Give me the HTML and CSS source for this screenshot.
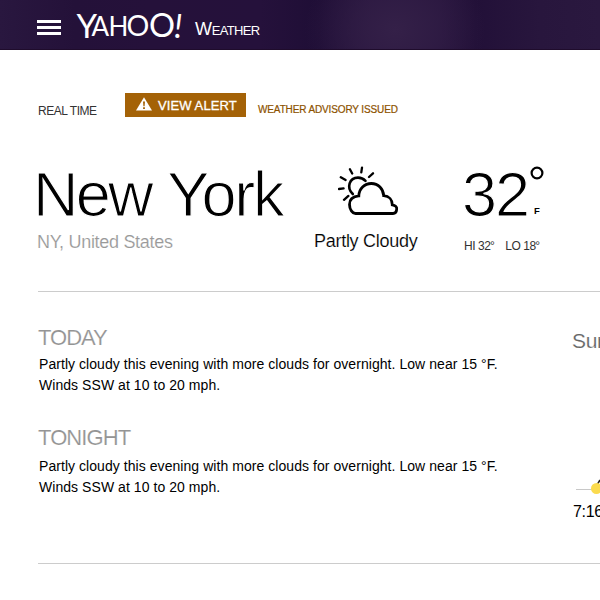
FILE: index.html
```html
<!DOCTYPE html>
<html lang="en">
<head>
<meta charset="utf-8">
<title>Yahoo Weather</title>
<link rel="stylesheet" href="styles.css">
</head>
<body>
<header class="topbar">
  <div class="menu"><span></span><span></span><span></span></div>
  <svg class="logo" width="110" height="50" viewBox="0 0 110 50"><text fill="#fff"><tspan x="0.500" y="37.500" font-size="33">Y</tspan><tspan x="15.500" y="35.500" font-size="26">A</tspan><tspan x="32.500" y="35.500" font-size="26">H</tspan><tspan x="50.500" y="36" font-size="28.500">O</tspan><tspan x="73" y="37" font-size="32.500">O</tspan><tspan x="98" y="37.500" font-size="33" font-style="italic">!</tspan></text></svg>
  <div class="product">W<span>EATHER</span></div>
</header>
<main>
  <section class="alerts">
    <span class="realtime">REAL TIME</span>
    <a class="alert-btn"><svg width="16" height="14" viewBox="0 0 16 14"><path d="M8 .2 16 13.6H0z" fill="#fff"/><path d="M7 4.5h2l-.4 4.8H7.4zM7.1 10.3h1.8v1.8H7.1z" fill="#a46207"/></svg><span>VIEW ALERT</span></a>
    <span class="advisory">WEATHER ADVISORY ISSUED</span>
  </section>
  <section class="current">
    <div class="place">
      <h1>New <span>York</span></h1>
      <p>NY, United States</p>
    </div>
    <div class="sky">
      <svg width="62" height="50" viewBox="0 0 62 50" fill="none" stroke="#000" stroke-linecap="round">
        <path stroke-width="2.800" d="M17.500 47.500C14.500 47.500 11.500 43.500 11.500 38.500C11.500 33.500 15 30.400 20.800 29.900C21 22.500 26.500 17.500 33.300 17.500C40.300 17.500 45.300 22.500 45.700 29.700C51.200 30 54.300 34 54.300 38.800C57.500 39.200 59 41.200 58.700 43.200C58.500 46 57.500 47.500 55 47.500H17.500"/>
        <path stroke-width="2.600" d="M14.800 28C8 21.500 11.500 11.600 20 11.600C23.500 11.600 25.500 12.700 27.500 14.800"/>
        <path stroke-width="2.300" d="M11.900 3.200 14.200 7.500M24 1.700 23.300 6.300M35 7.300 31 11M2.800 11.300 7.600 14M.900 23 5.600 22.300M6 33.800 10.400 29.900"/>
      </svg>
      <p>Partly Cloudy</p>
    </div>
    <div class="temp">
      <div class="degrees"><span class="num">32</span><span class="unit"><svg width="14" height="14" viewBox="0 0 14 14"><circle cx="7" cy="7" r="5.400" fill="none" stroke="#000" stroke-width="2.200"/></svg><b>F</b></span></div>
      <div class="range"><span>HI 32<i>°</i></span><span>LO 18<i>°</i></span></div>
    </div>
  </section>
  <section class="forecast">
    <div class="days">
      <h2>TODAY</h2>
      <p>Partly cloudy this evening with more clouds for overnight. Low near 15 °F.<br>Winds SSW at 10 to 20 mph.</p>
      <h2 class="tonight">TONIGHT</h2>
      <p>Partly cloudy this evening with more clouds for overnight. Low near 15 °F.<br>Winds SSW at 10 to 20 mph.</p>
    </div>
    <aside class="sun">
      <h3>Sun</h3>
      <svg width="30" height="20" viewBox="0 0 30 20"><path d="M3 11.500H22" stroke="#c8c8c8"/><path d="M24 7 27 2" stroke="#222" stroke-width="1.500"/><circle cx="23.500" cy="10.500" r="5.500" fill="#fbdb4e"/></svg>
      <time>7:16</time>
    </aside>
  </section>
</main>
</body>
</html>
```
FILE: styles.css
```css
* { box-sizing: border-box; margin: 0; padding: 0; }
html, body { width: 600px; height: 600px; overflow: hidden; }
body { background: #fff; color: #000; font-family: "Liberation Sans", Arial, sans-serif; }
.topbar {
  display: flex; height: 50px; padding-left: 37px; color: #fff;
  border-bottom: 1px solid #1f0c2c;
  background:
    radial-gradient(ellipse 90px 80px at 395px 30px, #342048 0%, rgba(52,32,72,.6) 45%, rgba(52,32,72,0) 100%),
    linear-gradient(90deg, #29173f 0, #241139 75px, #25113a 150px, #25113b 260px, #1f0e36 318px, #27143d 370px, #27143d 440px, #221038 475px, #28163d 540px, #2a183f 600px);
}
.menu { width: 24px; padding-top: 20px; }
.menu span { display: block; height: 3px; margin-bottom: 3px; background: #fff; }
.logo { flex: none; margin-left: 15px; font-family: Lato, sans-serif; }
.product { margin-left: 9px; font-size: 18px; line-height: 59px; letter-spacing: -.3px; }
.product span { font-size: 13px; letter-spacing: -.65px; }
.alerts { display: flex; height: 75px; padding: 43px 0 0 38px; }
.realtime { width: 87px; font-size: 12px; line-height: 36px; letter-spacing: -.45px; color: #333; }
.alert-btn { display: flex; width: 121px; height: 24px; padding: 4px 0 0 11px; background: #a46207; color: #fff; font-size: 13px; line-height: 17px; letter-spacing: .1px; }
.alert-btn span { margin-left: 6px; white-space: nowrap; -webkit-text-stroke: .3px #fff; }
.advisory { margin-left: 12px; font-size: 10px; line-height: 33px; letter-spacing: -.13px; color: #8d5200; -webkit-text-stroke: .2px #8d5200; white-space: nowrap; }
.current { display: flex; height: 167px; margin-left: 38px; border-bottom: 1px solid #ccc; }
.place { width: 276px; padding-top: 34px; white-space: nowrap; }
h1 { margin-left: -5px; font-size: 63px; line-height: 70px; font-weight: 400; letter-spacing: -2.800px; -webkit-text-stroke: 1.2px #fff; }
h1 span { margin-left: 2px; letter-spacing: -2.200px; }
.place p { margin: 3px 0 0 -1px; font-size: 18px; line-height: 20px; color: #999; letter-spacing: -.3px; -webkit-text-stroke: .15px #fff; }
.sky { width: 150px; padding-top: 41px; white-space: nowrap; }
.sky svg { display: block; margin-left: 24px; }
.sky p { margin-top: 14px; font-size: 18px; line-height: 22px; letter-spacing: -.28px; -webkit-text-stroke: .15px #fff; }
.temp { padding-top: 34px; }
.degrees { display: flex; height: 71px; }
.num { width: 66px; margin-left: -2px; font-size: 63px; line-height: 70px; letter-spacing: -2px; -webkit-text-stroke: 1.2px #fff; }
.unit { display: flex; flex-direction: column; padding: 7px 0 0 2px; }
.unit b { margin: 25px 0 0 4px; font-size: 9.500px; line-height: 12px; }
.range { display: flex; gap: 11px; margin-top: 8px; font-size: 12px; line-height: 16px; letter-spacing: -.45px; color: #333; }
.range i { font-style: normal; font-size: 12px; margin-left: -.5px; }
.forecast { display: flex; height: 272px; margin-left: 38px; border-bottom: 1px solid #ccc; }
.days { flex: none; width: 534px; padding-top: 33px; }
h2 { font-size: 22px; line-height: 26px; font-weight: 400; color: #949494; letter-spacing: -1px; -webkit-text-stroke: .15px #fff; }
.days p { margin: 3px 0 0 1px; font-size: 14px; line-height: 21px; letter-spacing: .055px; }
.days .tonight { margin-top: 29px; letter-spacing: -.9px; }
.days .tonight + p { margin-top: 5px; }
.sun { flex: none; width: 28px; padding-top: 36px; overflow: hidden; }
.sun h3 { font-size: 21px; font-weight: 400; line-height: 26px; color: #666; letter-spacing: -.3px; -webkit-text-stroke: .15px #fff; }
.sun svg { display: block; margin-top: 124px; margin-left: 1px; }
.sun time { display: block; margin: 4px 0 0 1px; font-size: 16px; line-height: 20px; letter-spacing: -.3px; }
```
